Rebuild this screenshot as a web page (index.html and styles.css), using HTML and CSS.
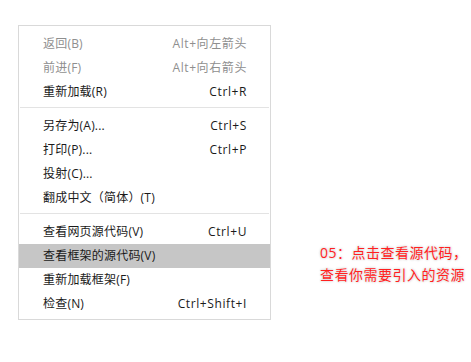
FILE: index.html
```html
<!DOCTYPE html>
<html lang="zh-CN">
<head>
    <meta charset="UTF-8">
    <title>右键菜单</title>
    <link rel="stylesheet" href="styles.css">
</head>
<body>

    <div class="page">
        <ul class="menu">
            <li class="item disabled"><span>返回(B)</span><span class="key">Alt+向左箭头</span></li>
            <li class="item disabled"><span>前进(F)</span><span class="key">Alt+向右箭头</span></li>
            <li class="item"><span>重新加载(R)</span><span class="key">Ctrl+R</span></li>
            <li class="sep"></li>
            <li class="item"><span>另存为(A)...</span><span class="key">Ctrl+S</span></li>
            <li class="item"><span>打印(P)...</span><span class="key">Ctrl+P</span></li>
            <li class="item"><span>投射(C)...</span></li>
            <li class="item"><span>翻成中文（简体）(T)</span></li>
            <li class="sep"></li>
            <li class="item"><span>查看网页源代码(V)</span><span class="key">Ctrl+U</span></li>
            <li class="item active"><span>查看框架的源代码(V)</span></li>
            <li class="item"><span>重新加载框架(F)</span></li>
            <li class="item"><span>检查(N)</span><span class="key">Ctrl+Shift+I</span></li>
        </ul>

        <p class="note">05：点击查看源代码，<br>查看你需要引入的资源</p>
    </div>

</body>
</html>
```

FILE: styles.css
```css
body {
    margin: 0;
    background-color: #fff;
    font-family: "Open Sans", "Noto Sans CJK SC", sans-serif;
}
.page {
    display: flex;
    align-items: flex-end;
    padding: 25px 0 0 18px;
}
.menu {
    list-style: none;
    margin: 0;
    padding: 6px 0 3px 0;
    width: 251px;
    border: 1px solid #d9d9d9;
    font-size: 12px;
    letter-spacing: 0.2px;
    color: #1a1a1a;
}
.item {
    display: flex;
    justify-content: space-between;
    align-items: center;
    height: 24px;
    padding: 0 23px 0 24px;
    line-height: 24px;
}
.key {
    letter-spacing: 0.6px;
}
.disabled {
    color: #8f8f8f;
}
.active {
    background-color: #c6c6c6;
}
.sep {
    height: 1px;
    margin: 3px 1px 6px 1px;
    background-color: #e3e3e3;
}
.note {
    margin: 0 0 34px 49px;
    font-size: 14px;
    line-height: 22px;
    letter-spacing: 0.5px;
    color: #ff2020;
    text-shadow: 0 0 1px #fff, 0 0 2px #ccc, 0 0 3px #ccc;
}
```
